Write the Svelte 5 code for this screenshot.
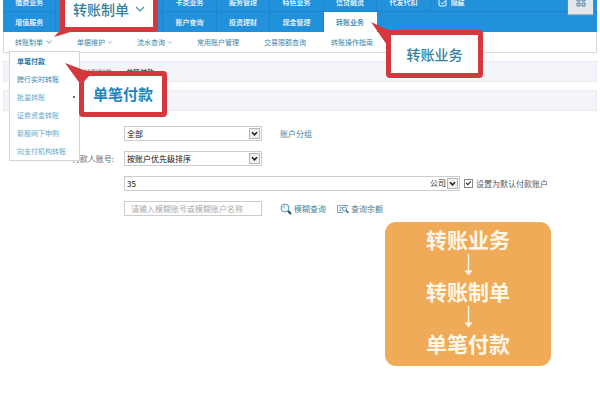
<script lang="ts">
	const topRow = ['缴费业务', '', '', '卡类业务', '服务管理', '特色业务', '信贷融资', '代发代扣'];
	const bottomRow = ['增值服务', '', '', '账户查询', '投资理财', '现金管理', '转账业务'];

	const subnav = [
		{ label: '转账制单', arrow: true, open: true },
		{ label: '单据维护', arrow: true },
		{ label: '流水查询', arrow: true },
		{ label: '常用账户管理' },
		{ label: '交易限额查询' },
		{ label: '转账操作指南' }
	];

	const menu = [
		{ label: '单笔付款', tone: 'current' },
		{ label: '跨行实时转账', tone: 'strong' },
		{ label: '批量转账', tone: '', more: true },
		{ label: '证券资金转账', tone: '' },
		{ label: '新股网下申购', tone: '' },
		{ label: '向支付机构转账', tone: '' }
	];

	const steps = ['转账业务', '转账制单', '单笔付款'];

	let setDefault = $state(true);
	let keyword = $state('');
</script>

{#snippet dropArrow()}
	<svg class="drop" viewBox="0 0 11 11" aria-hidden="true">
		<rect x="0.5" y="0.5" width="10" height="10" fill="#f0f0f0" stroke="#b5b5b5" />
		<path d="M3 4.2 5.5 6.8 8 4.2" fill="none" stroke="#222" stroke-width="1.6" />
	</svg>
{/snippet}

<div class="page">
	<header>
		<nav class="row top">
			{#each topRow as item}
				<span class="cell">{#if item}<a href="#top">{item}</a>{/if}</span>
			{/each}
			<button class="hide">
				<svg viewBox="0 0 9 9" aria-hidden="true">
					<rect x="1" y="1" width="7" height="7" rx="1" fill="none" stroke="#fff" />
					<path d="M3 4.5 4.5 6 7 3" fill="none" stroke="#fff" />
				</svg>
				隐藏
			</button>
		</nav>
		<nav class="row">
			{#each bottomRow as item}
				<span class="cell" class:active={item === '转账业务'}>{#if item}<a href="#top">{item}</a>{/if}</span>
			{/each}
		</nav>
		<button class="apps" aria-label="应用">
			<svg viewBox="0 0 10 10" aria-hidden="true">
				<path d="M1 1h3v3H1zM6 1h3v3H6zM1 6h3v3H1zM6 6h3v3H6z" fill="none" stroke="#4a7fa5" />
			</svg>
		</button>
	</header>

	<nav class="subnav">
		{#each subnav as item}
			<a href="#sub">
				{item.label}
				{#if item.arrow}
					<svg class:small={!item.open} viewBox="0 0 6 4" aria-hidden="true">
						<path d="M0.5 0.5 3 3.2 5.5 0.5" fill="none" stroke="currentColor" stroke-width="0.8" />
					</svg>
				{/if}
			</a>
		{/each}
		<div class="menu">
			{#each menu as item}
				<a href="#menu" class={item.tone}>
					{item.label}
					{#if item.more}<i></i>{/if}
				</a>
			{/each}
		</div>
	</nav>

	<div class="bar">
		<a href="#crumb">转账制单</a>
		<span>›</span>
		<strong>单笔付款</strong>
	</div>
	<div class="bar"></div>

	<form>
		<div class="field">
			<span class="label"></span>
			<span class="select">
				<select aria-label="账户分组"><option>全部</option></select>
				{@render dropArrow()}
			</span>
			<a href="#group" class="after">账户分组</a>
		</div>
		<div class="field">
			<label class="label" for="account">付款人账号:</label>
			<span class="select">
				<select id="account"><option>按账户优先级排序</option></select>
				{@render dropArrow()}
			</span>
		</div>
		<div class="field">
			<span class="label"></span>
			<span class="select wide">
				<select aria-label="账号"><option>35</option></select>
				<span class="tail">公司</span>
				{@render dropArrow()}
			</span>
			<label class="check">
				<input type="checkbox" bind:checked={setDefault} />
				设置为默认付款账户
			</label>
		</div>
		<div class="field">
			<span class="label"></span>
			<input class="search" type="text" aria-label="模糊查询" placeholder="请输入模糊账号或模糊账户名称" bind:value={keyword} />
			<a href="#search" class="after">
				<svg width="12" height="12" viewBox="0 0 12 12" aria-hidden="true">
					<circle cx="5" cy="5" r="4" fill="#eef7fa" stroke="#5b93a8" />
					<path d="M3 5a2 2 0 0 1 2-2" fill="none" stroke="#5b93a8" stroke-width="0.7" />
					<path d="m8 8 3 3" stroke="#1f4d63" stroke-width="2" />
				</svg>
				模糊查询
			</a>
			<a href="#balance" class="balance">
				<svg width="12" height="12" viewBox="0 0 12 12" aria-hidden="true">
					<path d="M10.5 4V2.5H.5v7H6M2.5 4.5h3M2.5 6h2M2.5 7.5h2" fill="none" stroke="#5b93a8" stroke-width="0.8" />
					<circle cx="7.5" cy="6" r="2" fill="#fff" stroke="#5b93a8" />
					<path d="m9 7.5 2.5 2.5" stroke="#2d6880" stroke-width="1.4" />
				</svg>
				查询余额
			</a>
		</div>
	</form>

	<section class="steps">
		{#each steps as step, i}
			{#if i > 0}
				<svg viewBox="0 0 9 22" aria-hidden="true">
					<path d="M4.5 0v18" stroke="#fff8ea" stroke-width="1.4" />
					<path d="M0.5 16.5h8L4.5 21.5z" fill="#fff8ea" />
				</svg>
			{/if}
			<p>{step}</p>
		{/each}
	</section>

	<div class="callout first">
		<svg class="pointer" viewBox="0 0 24 12" aria-hidden="true"><path d="M0 11 9 1h14v3z" /></svg>
		转账制单
		<svg class="chevron" viewBox="0 0 10 6" aria-hidden="true">
			<path d="M1 1 5 5 9 1" fill="none" stroke="#4a8ba3" stroke-width="1.2" />
		</svg>
	</div>
	<div class="callout second">
		<svg class="pointer" viewBox="0 0 20 24" aria-hidden="true"><path d="M0 0 19 9v4l-3 10z" /></svg>
		转账业务
	</div>
	<div class="callout third">
		<svg class="pointer" viewBox="0 0 24 24" aria-hidden="true"><path d="M0 0 24 9v4l-8 9z" /></svg>
		单笔付款
	</div>
</div>

<style>
	:global(body) {
		margin: 0;
		background: #fff;
	}

	.page {
		position: relative;
		padding: 0 3px;
		font-family: 'Noto Sans CJK SC', sans-serif;
		font-size: 7px;
		line-height: 12px;
		color: #555;
	}

	a {
		color: #3d87a8;
		text-decoration: none;
	}

	button {
		border: none;
		padding: 0;
		font: inherit;
		cursor: pointer;
	}

	header {
		position: relative;
		display: flex;
		flex-direction: column;
		justify-content: flex-end;
		height: 32px;
		overflow: hidden;
		background: #2191db;
	}

	.row {
		display: flex;
		flex-shrink: 0;
		height: 20px;
	}

	.row.top {
		box-shadow: inset 0 -1px #1b86cf;
	}

	.cell {
		display: flex;
		align-items: center;
		justify-content: center;
		box-sizing: border-box;
		width: 9%;
		border-right: 1px solid #1b86cf;
	}

	.cell a {
		color: #fff;
		font-weight: 500;
	}

	.cell.active {
		border-right-color: #fff;
		background: #fff;
	}

	.cell.active a {
		color: #2f7fa8;
	}

	.hide {
		display: flex;
		align-items: center;
		gap: 4px;
		margin-left: 7px;
		background: none;
		color: #fff;
		font-weight: 500;
	}

	.hide svg {
		width: 9px;
		height: 9px;
	}

	.apps {
		position: absolute;
		top: -8px;
		right: 4px;
		width: 25px;
		height: 22px;
		background: #e4e8ec;
		box-shadow: 0 1px 1px #a2b4c2;
	}

	.apps svg {
		width: 10px;
		height: 10px;
	}

	.subnav {
		position: relative;
		display: flex;
		align-items: center;
		gap: 25px;
		box-sizing: border-box;
		height: 21px;
		padding-left: 11px;
		border: 1px solid #d9d9d9;
		border-top: none;
	}

	.subnav > a {
		display: flex;
		align-items: center;
		gap: 3px;
		white-space: nowrap;
	}

	.subnav > a svg {
		width: 6px;
		height: 4px;
	}

	.subnav > a svg.small {
		width: 4px;
		height: 3px;
	}

	.menu {
		position: absolute;
		z-index: 2;
		top: 19px;
		left: 5px;
		box-sizing: border-box;
		width: 71px;
		border: 1px solid #d4d4d4;
		background: #fff;
	}

	.menu a {
		display: flex;
		align-items: center;
		justify-content: space-between;
		height: 18px;
		padding: 0 4px 0 7px;
		color: #5fa9cd;
		white-space: nowrap;
	}

	.menu a.current {
		color: #1a78ad;
		font-weight: 700;
	}

	.menu a.strong {
		color: #3388b2;
	}

	.menu i {
		width: 2px;
		height: 2px;
		background: #777;
	}

	.bar {
		display: flex;
		align-items: center;
		gap: 6px;
		box-sizing: border-box;
		height: 21px;
		margin-top: 8px;
		padding-left: 80px;
		border: 1px solid #ebebf2;
		background: #f4f4fb;
	}

	.bar a {
		color: #777;
	}

	.bar strong {
		color: #333;
		font-weight: 500;
	}

	form {
		display: flex;
		flex-direction: column;
		gap: 10px;
		padding-top: 15px;
		font-size: 8px;
	}

	.field {
		display: flex;
		align-items: center;
		height: 15px;
		white-space: nowrap;
	}

	.label {
		box-sizing: border-box;
		width: 121px;
		padding-right: 10px;
		text-align: right;
		color: #666;
	}

	.select {
		position: relative;
		display: flex;
		width: 138px;
		height: 15px;
	}

	.select.wide {
		width: 56vw;
	}

	select,
	.search {
		box-sizing: border-box;
		width: 100%;
		height: 15px;
		padding: 0 2px;
		border: 1px solid #ccc;
		border-radius: 0;
		background: #fff;
		color: #111;
		font-family: inherit;
		font-size: 8px;
		line-height: 12px;
		appearance: none;
	}

	.drop {
		position: absolute;
		top: 2px;
		right: 2px;
		width: 11px;
		height: 11px;
		pointer-events: none;
	}

	.tail {
		position: absolute;
		top: 1px;
		right: 14px;
		color: #222;
		pointer-events: none;
	}

	.search {
		width: 138px;
		padding: 0 6px;
	}

	.search::placeholder {
		color: #aaa;
		opacity: 1;
	}

	.after,
	.balance {
		display: flex;
		align-items: center;
		gap: 2px;
		margin-left: 18px;
		color: #4a8196;
	}

	.balance {
		margin-left: 11px;
	}

	.check {
		display: flex;
		align-items: center;
		gap: 3px;
		margin-left: 4px;
	}

	.check input {
		display: grid;
		place-items: center;
		box-sizing: border-box;
		width: 9px;
		height: 9px;
		margin: 0;
		border: 1px solid #888;
		background: #fff;
		appearance: none;
	}

	.check input:checked::before {
		content: '';
		width: 4px;
		height: 2px;
		margin-bottom: 2px;
		border: solid #222;
		border-width: 0 0 1px 1px;
		transform: rotate(-45deg);
	}

	.steps {
		display: flex;
		flex-direction: column;
		align-items: center;
		justify-content: center;
		gap: 2px;
		box-sizing: border-box;
		width: 166px;
		height: 144px;
		margin: 6px 46px 0 auto;
		padding-bottom: 6px;
		border-radius: 11px;
		background: #f0ab58;
	}

	.steps p {
		margin: 0;
		color: #fff8ea;
		font-size: 21px;
		font-weight: 700;
		line-height: 26px;
	}

	.steps svg {
		width: 9px;
		height: 22px;
	}

	.callout {
		position: absolute;
		z-index: 3;
		display: flex;
		align-items: center;
		justify-content: center;
		box-sizing: border-box;
		border: 5px solid #d4373c;
		border-radius: 4px;
		background: #fff;
		color: #32809f;
		font-size: 14px;
		font-weight: 500;
		line-height: 20px;
		white-space: nowrap;
	}

	.pointer {
		position: absolute;
		fill: #d4373c;
	}

	.first {
		top: -14px;
		left: 60px;
		gap: 6px;
		width: 98px;
		height: 46px;
	}

	.first .pointer {
		top: 35px;
		left: -11px;
		width: 24px;
		height: 12px;
	}

	.chevron {
		width: 10px;
		height: 6px;
	}

	.second {
		top: 30px;
		left: 386px;
		width: 97px;
		height: 48px;
	}

	.second .pointer {
		top: -13px;
		left: -20px;
		width: 20px;
		height: 24px;
	}

	.third {
		top: 71px;
		left: 79px;
		width: 88px;
		height: 46px;
		color: #1a86c0;
		font-size: 15px;
		font-weight: 700;
	}

	.third .pointer {
		top: -13px;
		left: -19px;
		width: 24px;
		height: 24px;
	}
</style>
